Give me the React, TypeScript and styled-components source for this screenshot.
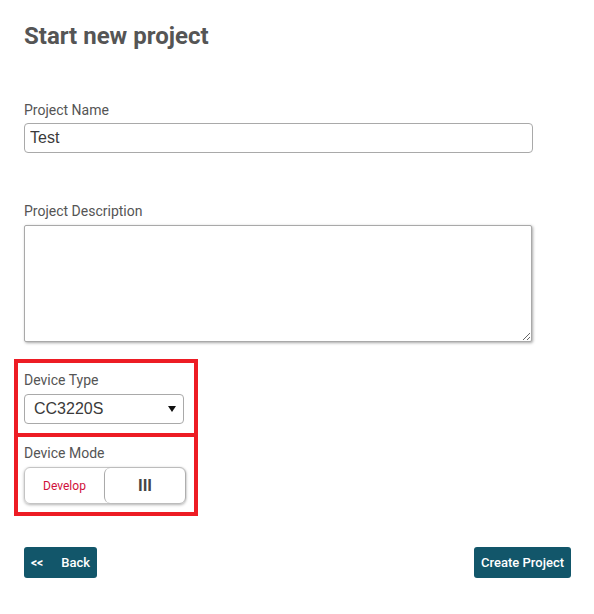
import styled, { createGlobalStyle } from 'styled-components';

const GlobalStyle = createGlobalStyle`
  body {
    margin: 0;
    background: #fff;
    font-family: Roboto, "Liberation Sans", Arial, sans-serif;
  }
`;

const Page = styled.div`
  padding: 22px 23px 30px 24px;
  width: 547px;
`;

const Title = styled.h1`
  margin: 0 0 51px;
  font-size: 24px;
  line-height: 29px;
  font-weight: 700;
  color: #555;
`;

const Field = styled.div<{ gap?: number }>`
  display: flex;
  flex-direction: column;
  margin-bottom: ${(p) => p.gap ?? 0}px;
`;

const Label = styled.label<{ space?: number }>`
  font-size: 14px;
  line-height: 17px;
  color: #555;
  margin-bottom: ${(p) => p.space ?? 4}px;
`;

const TextInput = styled.input`
  box-sizing: border-box;
  width: 509px;
  height: 30px;
  padding: 0 5px;
  border: 1px solid #a9a9a9;
  border-radius: 4px;
  font-family: "Liberation Sans", Arial, sans-serif;
  font-size: 16px;
  color: #3a3a3a;
  outline: none;
`;

const TextArea = styled.textarea`
  box-sizing: border-box;
  width: 508px;
  height: 117px;
  border: 1px solid #a9a9a9;
  border-radius: 2px;
  box-shadow: 1px 1px 3px rgba(0, 0, 0, 0.35);
  font-family: "Liberation Sans", Arial, sans-serif;
  font-size: 16px;
  outline: none;
`;

const Highlight = styled.div<{ first?: boolean }>`
  box-sizing: border-box;
  width: 184px;
  margin-left: -10px;
  border: 4px solid #ed1c24;
  border-top-width: ${(p) => (p.first ? 4 : 0)}px;
  padding: ${(p) => (p.first ? '9px 6px 9px' : '8px 6px 8px')};
  margin-top: ${(p) => (p.first ? 17 : 0)}px;
`;

const SelectBox = styled.div`
  box-sizing: border-box;
  width: 160px;
  height: 30px;
  display: flex;
  align-items: center;
  justify-content: space-between;
  padding: 0 7px 0 9px;
  border: 1px solid #a9a9a9;
  border-radius: 4px;
  font-family: "Liberation Sans", Arial, sans-serif;
  font-size: 16px;
  color: #3a3a3a;
`;

const Toggle = styled.div`
  box-sizing: border-box;
  width: 162px;
  height: 37px;
  display: flex;
  border: 1px solid #c4c4c4;
  border-radius: 6px;
  box-shadow: 0 1px 3px rgba(0, 0, 0, 0.3);
`;

const ToggleSide = styled.div<{ knob?: boolean }>`
  flex: ${(p) => (p.knob ? '1' : '0 0 79px')};
  display: flex;
  align-items: center;
  justify-content: center;
  font-size: ${(p) => (p.knob ? 16 : 12)}px;
  font-weight: ${(p) => (p.knob ? 700 : 400)};
  color: ${(p) => (p.knob ? '#444' : '#d0103a')};
  border-left: ${(p) => (p.knob ? '1px solid #aaa' : 'none')};
  border-radius: 6px;
  box-shadow: ${(p) => (p.knob ? '1px 0 2px rgba(0,0,0,0.15)' : 'none')};
`;

const Actions = styled.div`
  display: flex;
  justify-content: space-between;
  margin-top: 31px;
`;

const Button = styled.button`
  height: 31px;
  display: flex;
  align-items: center;
  gap: 18px;
  padding: 0 7px;
  border: none;
  border-radius: 3px;
  background: #12566a;
  color: #fff;
  font-family: Roboto, sans-serif;
  font-size: 13px;
  font-weight: 500;
`;

const Chevrons = styled.span`
  font-size: 12px;
  font-weight: 700;
`;

export default function App() {
  return (
    <>
      <GlobalStyle />
      <Page>
        <Title>Start new project</Title>
        <Field gap={50}>
          <Label>Project Name</Label>
          <TextInput defaultValue="Test" />
        </Field>
        <Field>
          <Label space={5}>Project Description</Label>
          <TextArea />
        </Field>
        <Highlight first>
          <Label as="div" space={5}>Device Type</Label>
          <SelectBox role="combobox">
            <span>CC3220S</span>
            <svg width="8" height="6" viewBox="0 0 8 6">
              <path d="M0 0h8L4 6z" fill="#111" />
            </svg>
          </SelectBox>
        </Highlight>
        <Highlight>
          <Label as="div" space={5}>Device Mode</Label>
          <Toggle>
            <ToggleSide>Develop</ToggleSide>
            <ToggleSide knob>III</ToggleSide>
          </Toggle>
        </Highlight>
        <Actions>
          <Button>
            <Chevrons>&lt;&lt;</Chevrons>
            Back
          </Button>
          <Button>Create Project</Button>
        </Actions>
      </Page>
    </>
  );
}
